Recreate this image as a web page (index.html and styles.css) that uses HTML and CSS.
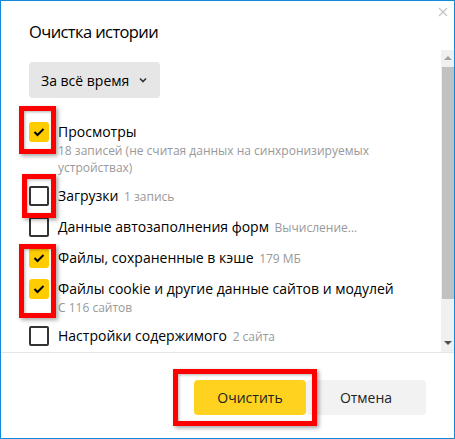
FILE: index.html
```html
<!DOCTYPE html>
<html lang="ru">
<head>
    <meta charset="UTF-8">
    <title>Очистка истории</title>
    <link rel="stylesheet" href="styles.css">
</head>
<body>

    <div class="dialog">
        <!-- Close button -->
        <div class="close-btn">
            <svg width="10" height="10" viewBox="0 0 10 10"><path d="M1 1 L9 9 M9 1 L1 9" stroke="#c4c4c4" stroke-width="1.2" fill="none"/></svg>
        </div>

        <h1 class="title">Очистка истории</h1>

        <div class="body">
            <div class="scroll-content">
                <button class="period">За всё время
                    <svg width="8" height="6" viewBox="0 0 8 6"><path d="M1 1.5 L4 4.5 L7 1.5" stroke="#333" stroke-width="1.6" fill="none"/></svg>
                </button>

                <div class="items">
                    <div class="item">
                        <span class="check checked"><svg width="12" height="10" viewBox="0 0 12 10"><path d="M1.5 5 L4.5 8 L10.5 2" stroke="#000" stroke-width="2" fill="none"/></svg></span>
                        <div class="label">
                            <div>Просмотры</div>
                            <div class="sub">18 записей (не считая данных на синхронизируемых устройствах)</div>
                        </div>
                    </div>
                    <div class="item">
                        <span class="check"></span>
                        <div class="label">Загрузки <span class="hint">1 запись</span></div>
                    </div>
                    <div class="item">
                        <span class="check"></span>
                        <div class="label">Данные автозаполнения форм <span class="hint">Вычисление...</span></div>
                    </div>
                    <div class="item">
                        <span class="check checked"><svg width="12" height="10" viewBox="0 0 12 10"><path d="M1.5 5 L4.5 8 L10.5 2" stroke="#000" stroke-width="2" fill="none"/></svg></span>
                        <div class="label">Файлы, сохраненные в кэше <span class="hint">179 МБ</span></div>
                    </div>
                    <div class="item">
                        <span class="check checked"><svg width="12" height="10" viewBox="0 0 12 10"><path d="M1.5 5 L4.5 8 L10.5 2" stroke="#000" stroke-width="2" fill="none"/></svg></span>
                        <div class="label">
                            <div>Файлы cookie и другие данные сайтов и модулей</div>
                            <div class="sub">С 116 сайтов</div>
                        </div>
                    </div>
                    <div class="item">
                        <span class="check"></span>
                        <div class="label">Настройки содержимого <span class="hint">2 сайта</span></div>
                    </div>
                </div>
            </div>

            <!-- Scrollbar -->
            <div class="scrollbar">
                <div class="arrow up"></div>
                <div class="thumb"></div>
                <div class="arrow down"></div>
            </div>
        </div>

        <div class="footer">
            <button class="btn btn-primary">Очистить</button>
            <button class="btn">Отмена</button>
        </div>

        <!-- Red annotation frames -->
        <div class="mark mark-1"></div>
        <div class="mark mark-2"></div>
        <div class="mark mark-3"></div>
        <div class="mark mark-4"></div>
    </div>

</body>
</html>
```

FILE: styles.css
```css
body {
    margin: 0;
    padding: 0;
    background-color: white;
    font-family: "Open Sans", "Noto Sans", sans-serif;
    color: #000;
}

.dialog {
    position: relative;
    width: 455px;
    height: 439px;
    box-sizing: border-box;
    border: 1px solid #0f8ad8;
    display: flex;
    flex-direction: column;
    overflow: hidden;
}

.close-btn {
    position: absolute;
    top: 6px;
    right: 6px;
    line-height: 0;
}

.title {
    margin: 0;
    padding: 21px 0 0 28px;
    height: 28px;
    font-size: 16.5px;
    letter-spacing: -0.6px;
    font-weight: normal;
    line-height: 20px;
}

/* Scroll area */
.body {
    display: flex;
    height: 302px;
}

.scroll-content {
    flex: 1;
    padding: 12px 0 0 28px;
}

.period {
    display: flex;
    align-items: center;
    gap: 10px;
    height: 36px;
    padding: 0 13px 0 12px;
    border: none;
    border-radius: 4px;
    background-color: #e6e6e6;
    font-family: inherit;
    font-size: 14px;
    color: #000;
}

.items {
    display: flex;
    flex-direction: column;
    gap: 10px;
    margin-top: 24px;
}

.item {
    display: flex;
    align-items: flex-start;
}

.check {
    flex: none;
    width: 20px;
    height: 20px;
    box-sizing: border-box;
    border: 2px solid #333;
    border-radius: 2px;
    margin-right: 9px;
    display: flex;
    align-items: center;
    justify-content: center;
}

.check.checked {
    border: none;
    border-radius: 3px;
    background-color: #ffcc00;
}

.label {
    font-size: 14px;
    line-height: 20px;
    white-space: nowrap;
}

.hint {
    font-size: 12px;
    color: #999;
    margin-left: 2px;
}

.sub {
    font-size: 12px;
    line-height: 17px;
    color: #999;
    white-space: normal;
    width: 340px;
}

.scrollbar {
    width: 13px;
    background-color: #f0f0f0;
    display: flex;
    flex-direction: column;
    align-items: center;
}

.arrow {
    width: 0;
    height: 0;
    border-left: 4px solid transparent;
    border-right: 4px solid transparent;
}

.arrow.up {
    margin-top: 6px;
    border-bottom: 4px solid #a3a3a3;
}

.arrow.down {
    margin-top: 42px;
    border-top: 4px solid #505050;
}

.thumb {
    width: 12px;
    height: 232px;
    margin: 7px 0 0 1px;
    background-color: #c1c1c1;
}

/* Footer */
.footer {
    flex: 1;
    border-top: 1px solid #e5e5e5;
    display: flex;
    justify-content: flex-end;
    align-items: flex-start;
    padding: 27px 28px 0 0;
}

.btn {
    width: 120px;
    height: 35px;
    border: none;
    border-radius: 4px;
    background-color: #f2f2f2;
    font-family: inherit;
    font-size: 14px;
    color: #222;
}

.btn-primary {
    width: 112px;
    background-color: #ffd21f;
}

/* Annotation frames */
.mark {
    position: absolute;
    box-sizing: border-box;
    border: 5px solid #ff0000;
    box-shadow: 2px 2px 4px rgba(0, 0, 0, 0.35), inset 1px 1px 3px rgba(0, 0, 0, 0.3);
}

.mark-1 { left: 18px; top: 105px; width: 37px; height: 48px; }
.mark-2 { left: 21px; top: 173px; width: 34px; height: 44px; }
.mark-3 { left: 18px; top: 243px; width: 37px; height: 74px; }
.mark-4 { left: 172px; top: 368px; width: 144px; height: 57px; }
```
